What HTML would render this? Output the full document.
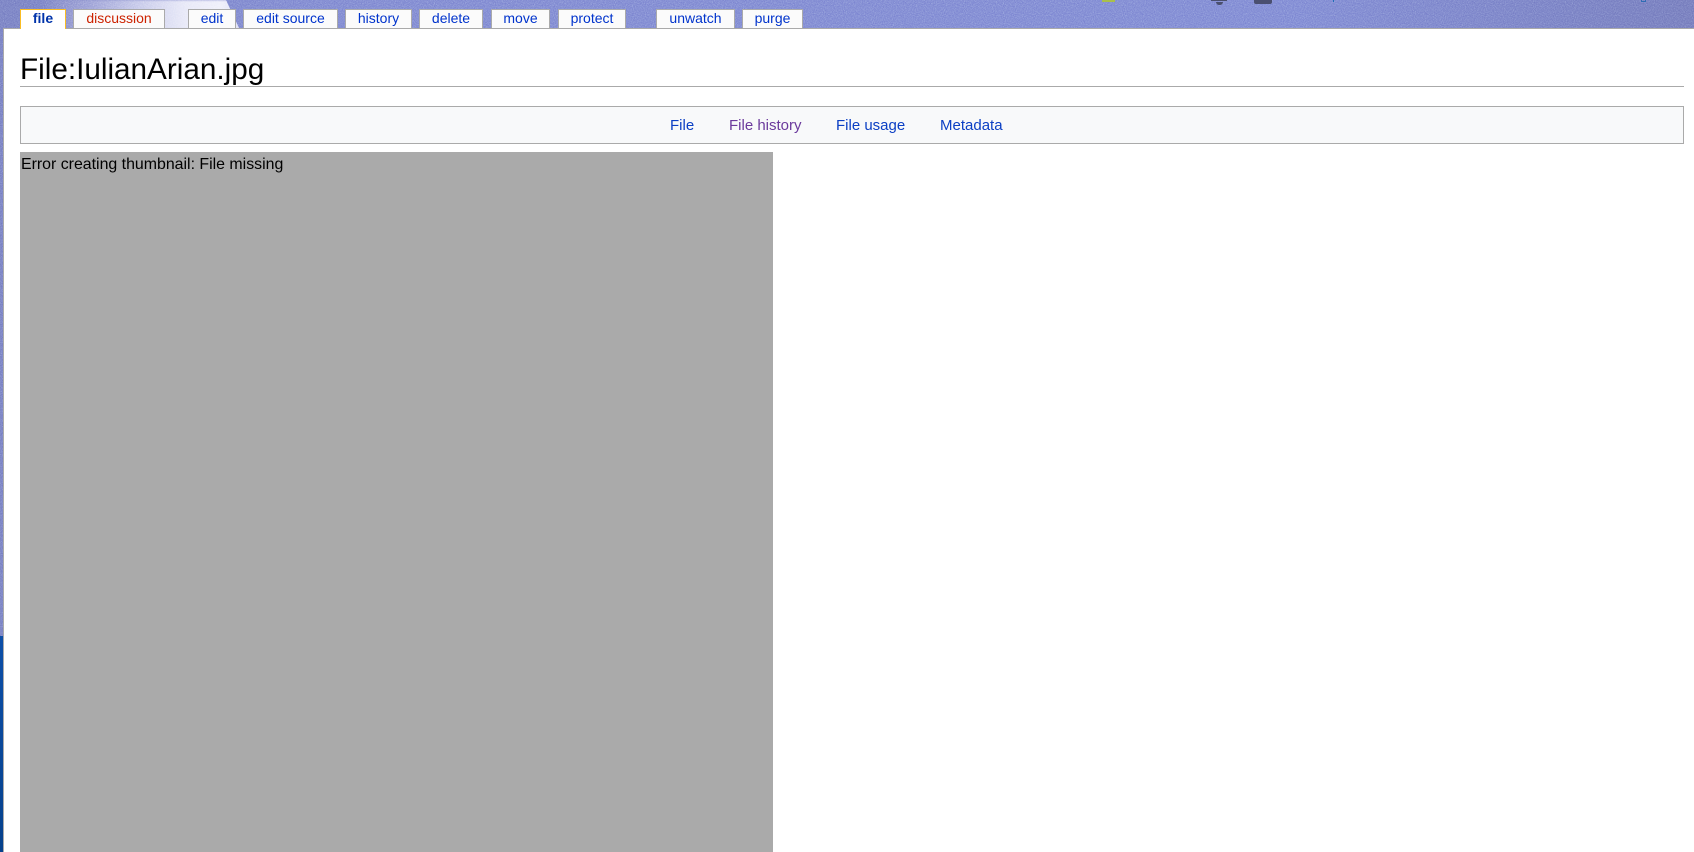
<!DOCTYPE html>
<html lang="en">
<head>
<meta charset="utf-8">
<title>File:IulianArian.jpg</title>
<style>
html,body{margin:0;padding:0;width:1694px;height:852px;overflow:hidden;background:#fff;font-family:"Liberation Sans",Arial,sans-serif;}
a{text-decoration:none;color:#0645ad}
.abs{position:absolute}
#bg{left:0;top:0;width:1694px;height:852px;overflow:hidden;
background:linear-gradient(90deg,#6f76bd 0,#757dcc 300px,#757ecf 1300px,#6c72b6 1694px);}
#strip{left:0;top:636px;width:3px;height:216px;background:linear-gradient(180deg,#0d4fa8,#06418c);}
#sheet{left:3px;top:28px;width:1691px;height:824px;background:#fff;border-top:1px solid #aaa;border-left:1px solid #aaa;box-sizing:border-box;}
.tab{position:absolute;top:9px;height:19px;background:#fbfbfb;border:1px solid #aaa;border-bottom:0;box-sizing:border-box;text-align:center;font-size:14px;line-height:16px;color:#0033cc;white-space:nowrap;}
.tab.sel{top:9px;height:20px;background:#fff;border-color:#fabd23;border-bottom:0;font-weight:bold;color:#0033aa;z-index:3;}
.tab.new{color:#cc2200;}
h1{position:absolute;margin:0;left:20px;top:52px;font-weight:normal;font-size:29.7px;line-height:36px;color:#000;white-space:nowrap;}
#rule{left:20px;top:86px;width:1664px;height:1px;background:#aaa;}
#nav{left:20px;top:106px;width:1664px;height:38px;background:#f8f9fa;border:1px solid #aaa;box-sizing:border-box;}
.nl{position:absolute;top:116.5px;font-size:15px;line-height:18px;color:#0b3fc4;white-space:nowrap;}
#thumb{left:20px;top:152px;width:753px;height:700px;background:#aaa;color:#000;font-size:15.9px;line-height:18px;}
#thumb span{position:absolute;left:1px;top:4px;white-space:nowrap;}
</style>
</head>
<body>
<div id="bg" class="abs">
<div class="abs" style="left:40px;top:0;width:205px;height:30px;clip-path:polygon(0 0,186px 0,200px 30px,0 30px);filter:blur(1px);background:linear-gradient(90deg,rgba(215,217,240,0) 0,rgba(190,192,232,.45) 50px,rgba(215,217,242,.8) 100px,#e6e7f7 145px,#eeeefa 180px,#d6d8f2 205px);"></div>
<svg class="abs" style="left:0;top:0;mix-blend-mode:overlay;opacity:.7" width="1694" height="852" aria-hidden="true">
<filter id="n" x="0" y="0" width="100%" height="100%"><feTurbulence type="fractalNoise" baseFrequency="0.9" numOctaves="2" seed="4"/><feColorMatrix type="saturate" values="0"/></filter>
<rect width="1694" height="852" filter="url(#n)"/>
</svg>
<div id="strip" class="abs"></div>
<div class="abs" style="left:1102px;top:0;width:13px;height:2px;background:#a9bf4c;"></div>
<div class="abs" style="left:1211px;top:0;width:16px;height:1px;background:#4a4f6e;"></div>
<div class="abs" style="left:1216px;top:2px;width:7px;height:3px;background:#4a4f6e;border-radius:0 0 3px 3px;"></div>
<div class="abs" style="left:1254px;top:0;width:18px;height:4px;background:#4a4f70;border-radius:0 0 2px 2px;"></div>
<div class="abs" style="left:1333px;top:0;width:1px;height:2px;background:#1d6fb8;"></div>
<div class="abs" style="left:1641px;top:0;width:5px;height:2px;border:1px solid #2f6cb4;border-top:0;box-sizing:border-box;"></div>
</div>

<div id="sheet" class="abs"></div>

<a class="tab sel" href="#" style="left:20px;width:46px;">file</a>
<a class="tab new" href="#" style="left:73px;width:92px;">discussion</a>
<a class="tab" href="#" style="left:188px;width:48px;">edit</a>
<a class="tab" href="#" style="left:243px;width:95px;">edit source</a>
<a class="tab" href="#" style="left:345px;width:67px;">history</a>
<a class="tab" href="#" style="left:419px;width:64px;">delete</a>
<a class="tab" href="#" style="left:491px;width:59px;">move</a>
<a class="tab" href="#" style="left:558px;width:68px;">protect</a>
<a class="tab" href="#" style="left:656px;width:79px;">unwatch</a>
<a class="tab" href="#" style="left:742px;width:61px;">purge</a>

<h1>File:IulianArian.jpg</h1>
<div id="rule" class="abs"></div>

<div id="nav" class="abs"></div>
<a class="nl" href="#" style="left:670px;">File</a>
<a class="nl" href="#" style="left:729px;color:#6b3a9c;">File history</a>
<a class="nl" href="#" style="left:836px;">File usage</a>
<a class="nl" href="#" style="left:940px;">Metadata</a>

<div id="thumb" class="abs"><span>Error creating thumbnail: File missing</span></div>
</body>
</html>
